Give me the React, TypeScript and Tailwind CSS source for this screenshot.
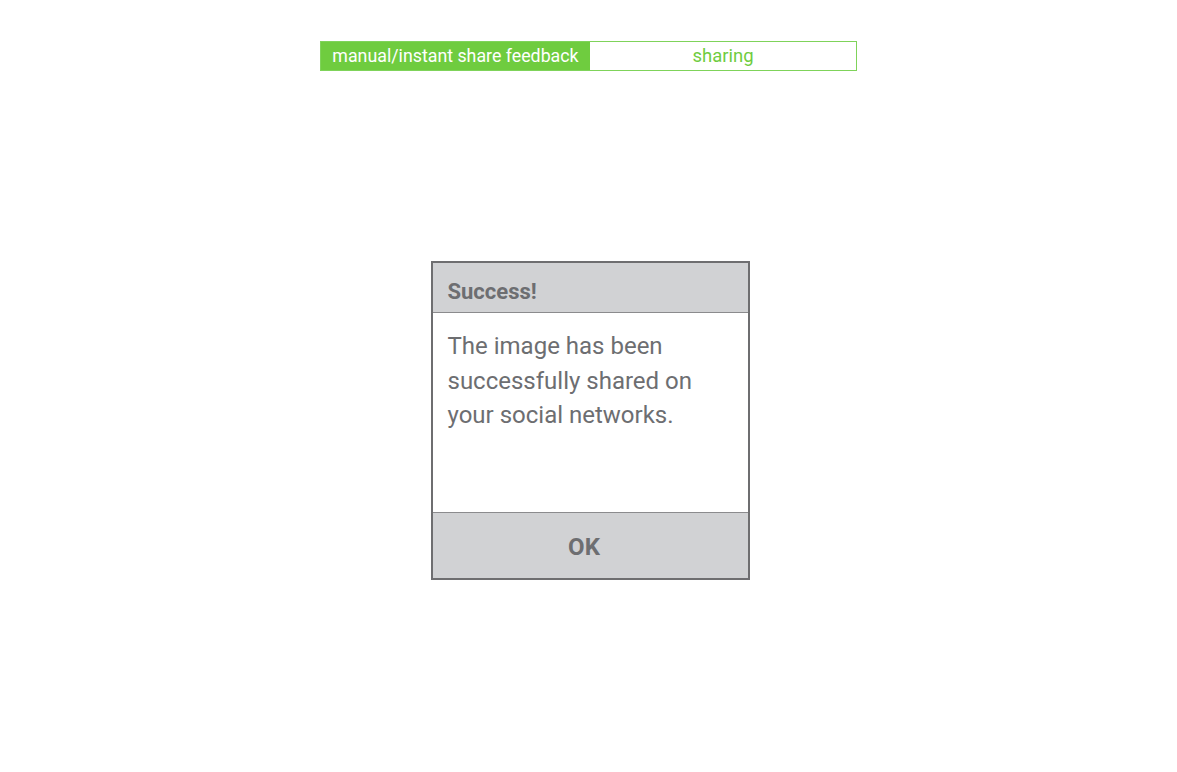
export default function App() {
  return (
    <div className="min-h-screen w-full bg-white font-['Roboto',sans-serif]">
      <div className="flex justify-center pt-[41px]">
        <div className="flex h-[30px] w-[537px] border border-[#7fd35a]">
          <div className="flex w-[269px] items-center justify-center bg-[#6fcc3f] pt-[1px] text-[17.8px] text-white">
            manual/instant share feedback
          </div>
          <div className="flex flex-1 items-center justify-center pt-[1px] text-[18.5px] text-[#6fcc3f]">
            sharing
          </div>
        </div>
      </div>

      <div className="flex justify-center pt-[190px] pl-[3px]">
        <div className="flex w-[319px] flex-col border-2 border-[#6e6e70] bg-white">
          <div className="flex h-[50px] items-center border-b border-[#8b8b8d] bg-[#d1d2d4] px-[15px] pt-[7px]">
            <span className="text-[22px] font-bold text-[#6d6e71]">Success!</span>
          </div>
          <div className="h-[199px] px-[15px] pt-[16px] text-[24px] leading-[34.5px] text-[#6d6e71]">
            The image has been successfully shared on your social networks.
          </div>
          <div className="flex h-[66px] items-center justify-center border-t border-[#8b8b8d] bg-[#d1d2d4] pr-[12px] pt-[2px]">
            <span className="text-[24px] font-bold text-[#6d6e71]">OK</span>
          </div>
        </div>
      </div>
    </div>
  )
}
